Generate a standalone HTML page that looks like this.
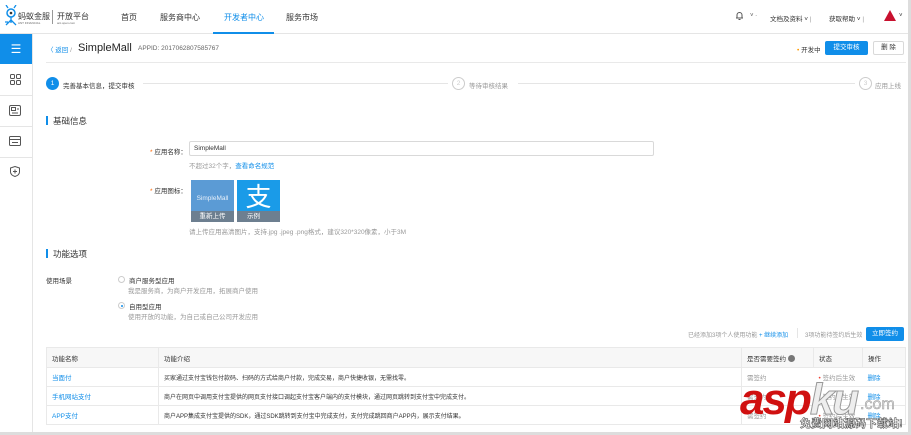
<!DOCTYPE html>
<html><head><meta charset="utf-8"><style>
*{margin:0;padding:0;box-sizing:border-box}
body{width:911px;height:435px;overflow:hidden;background:#fff;font-family:"Liberation Sans","Noto Sans CJK SC",sans-serif;font-size:7px;color:#333;position:relative}
.a{position:absolute;white-space:nowrap}
.blue{color:#108ee9}.gray{color:#999}
td{border-bottom:1px solid #e9e9e9;padding-left:5px;font-size:6.5px;height:19px}
</style></head><body>
<div class="a" style="left:0;top:0;width:911px;height:34px;border-bottom:1px solid #e5e5e5"></div>
<svg class="a" style="left:4px;top:5px" width="14" height="22" viewBox="0 0 14 22"><circle cx="7" cy="8" r="4" fill="none" stroke="#108ee9" stroke-width="1.5"/><circle cx="7" cy="8" r="1.3" fill="#333"/><path d="M4 3 L2 0 M10 3 L12 0 M7 12 L7 18 M7 15 L2 20 M7 15 L12 20 M4 17 L1 17" stroke="#108ee9" stroke-width="1.3" fill="none"/></svg>
<div class="a" style="left:18px;top:11px;font-size:8px;color:#333">蚂蚁金服</div>
<div class="a" style="left:18px;top:21px;font-size:3px;color:#666">ANT FINANCIAL</div>
<div class="a" style="left:52px;top:10px;width:1px;height:14px;background:#999"></div>
<div class="a" style="left:57px;top:11px;font-size:8px">开放平台</div>
<div class="a" style="left:57px;top:21px;font-size:3px;color:#666">ant.open.com</div>
<div class="a" style="left:121px;top:12px;font-size:8px">首页</div>
<div class="a" style="left:160px;top:12px;font-size:8px">服务商中心</div>
<div class="a blue" style="left:224px;top:12px;font-size:8px">开发者中心</div>
<div class="a" style="left:213px;top:32px;width:61px;height:2px;background:#108ee9"></div>
<div class="a" style="left:286px;top:12px;font-size:8px">服务市场</div>
<svg class="a" style="left:735px;top:11px" width="9" height="10" viewBox="0 0 9 10"><path d="M2 7 V4 A2.5 2.5 0 0 1 7 4 V7 H1 H8 M3.5 8.5 H5.5" stroke="#555" fill="none"/></svg>
<div class="a" style="left:750px;top:13px;font-size:6px;color:#555">˅ ·</div>
<div class="a" style="left:770px;top:13px;font-size:6.5px">文档及资料 ˅ <span class="gray">|</span></div>
<div class="a" style="left:829px;top:13px;font-size:6.5px">获取帮助 ˅ <span class="gray">|</span></div>
<div class="a" style="left:884px;top:10px;width:0;height:0;border-left:6px solid transparent;border-right:6px solid transparent;border-bottom:11px solid #c8102e"></div>
<div class="a" style="left:899px;top:13px;font-size:6px">˅</div>
<!-- sidebar -->
<div class="a" style="left:0;top:34px;width:33px;height:401px;border-right:1px solid #e5e5e5"></div>
<div class="a" style="left:0;top:34px;width:32px;height:30px;background:#108ee9;color:#fff;font-size:12px;text-align:center;line-height:30px">☰</div>
<div class="a" style="left:0;top:95px;width:32px;height:1px;background:#e5e5e5"></div>
<div class="a" style="left:0;top:126px;width:32px;height:1px;background:#e5e5e5"></div>
<div class="a" style="left:0;top:157px;width:32px;height:1px;background:#e5e5e5"></div>
<svg class="a" style="left:10px;top:74px" width="11" height="11" viewBox="0 0 11 11"><g fill="none" stroke="#555"><rect x="0.5" y="0.5" width="4" height="4" rx="1"/><rect x="6.5" y="0.5" width="4" height="4" rx="1"/><rect x="0.5" y="6.5" width="4" height="4" rx="1"/><rect x="6.5" y="6.5" width="4" height="4" rx="1"/></g></svg>
<svg class="a" style="left:9px;top:105px" width="12" height="11" viewBox="0 0 12 11"><g fill="none" stroke="#555"><rect x="0.5" y="0.5" width="11" height="10" rx="1.5"/><rect x="2.5" y="2.5" width="4" height="3"/><path d="M8 4 H10 M3 8 H9"/></g></svg>
<svg class="a" style="left:9px;top:136px" width="12" height="10" viewBox="0 0 12 10"><g fill="none" stroke="#555"><rect x="0.5" y="0.5" width="11" height="9" rx="1"/><path d="M0.5 3.5 H11.5 M3 6.5 H9"/></g></svg>
<svg class="a" style="left:10px;top:166px" width="10" height="11" viewBox="0 0 10 11"><path d="M5 0.5 L9.5 2 V6 Q9.5 9 5 10.5 Q0.5 9 0.5 6 V2 Z M5 3.5 V7.5 M3 5.5 H7" fill="none" stroke="#555"/></svg>
<!-- subheader -->
<div class="a blue" style="left:47px;top:44px;font-size:6.5px">〈 返回 <span class="gray">/</span></div>
<div class="a" style="left:78px;top:42px;font-size:11px;color:#222">SimpleMall</div>
<div class="a" style="left:138px;top:45px;font-size:6.5px;color:#666">APPID: 2017062807585767</div>
<div class="a" style="left:797px;top:44px;font-size:6.5px"><span style="color:#f90">•</span> 开发中</div>
<div class="a" style="left:825px;top:41px;width:43px;height:14px;background:#108ee9;border-radius:2px;color:#fff;font-size:6.5px;text-align:center;line-height:14px">提交审核</div>
<div class="a" style="left:873px;top:41px;width:31px;height:14px;border:1px solid #d9d9d9;border-radius:2px;font-size:6.5px;text-align:center;line-height:12px">删 除</div>
<div class="a" style="left:46px;top:62px;width:860px;height:1px;background:#e9e9e9"></div>
<!-- steps -->
<div class="a" style="left:46px;top:77px;width:13px;height:13px;border-radius:50%;background:#108ee9;color:#fff;font-size:6.5px;text-align:center;line-height:13px">1</div>
<div class="a" style="left:63px;top:80px;font-size:6.5px">完善基本信息，提交审核</div>
<div class="a" style="left:143px;top:83px;width:305px;height:1px;background:#e5e5e5"></div>
<div class="a" style="left:452px;top:77px;width:13px;height:13px;border-radius:50%;border:1px solid #ccc;color:#ccc;font-size:6.5px;text-align:center;line-height:11px">2</div>
<div class="a gray" style="left:469px;top:80px;font-size:6.5px">等待审核结果</div>
<div class="a" style="left:518px;top:83px;width:337px;height:1px;background:#e5e5e5"></div>
<div class="a" style="left:859px;top:77px;width:13px;height:13px;border-radius:50%;border:1px solid #ccc;color:#ccc;font-size:6.5px;text-align:center;line-height:11px">3</div>
<div class="a gray" style="left:875px;top:80px;font-size:6.5px">应用上线</div>
<!-- basic -->
<div class="a" style="left:46px;top:116px;width:2px;height:9px;background:#108ee9"></div>
<div class="a" style="left:53px;top:115px;font-size:8.5px">基础信息</div>
<div class="a" style="left:150px;top:146px;font-size:6.5px"><span style="color:#f60">*</span> 应用名称：</div>
<div class="a" style="left:189px;top:141px;width:465px;height:15px;border:1px solid #d9d9d9;border-radius:2px;font-size:6.5px;padding:3px 0 0 4px">SimpleMall</div>
<div class="a gray" style="left:189px;top:160px;font-size:6.5px">不超过32个字，<span class="blue">查看命名规范</span></div>
<div class="a" style="left:150px;top:185px;font-size:6.5px"><span style="color:#f60">*</span> 应用图标：</div>
<div class="a" style="left:191px;top:180px;width:43px;height:42px;background:#5b9bd5;color:#e8f0fa;font-size:6.5px;text-align:center;padding-top:15px">SimpleMall</div>
<div class="a" style="left:191px;top:211px;width:43px;height:11px;background:#6d7f90;color:#fff;font-size:6.5px;text-align:center;line-height:11px">重新上传</div>
<div class="a" style="left:237px;top:180px;width:43px;height:42px;background:#1a9be8;color:#fff;font-size:26px;text-align:center;line-height:34px">支</div>
<div class="a" style="left:237px;top:211px;width:43px;height:11px;background:#6d7f90;color:#fff;font-size:6.5px;line-height:11px;padding-left:10px">示例</div>
<div class="a gray" style="left:189px;top:226px;font-size:6.5px">请上传应用高清图片，支持.jpg .jpeg .png格式，建议320*320像素，小于3M</div>
<div class="a" style="left:46px;top:249px;width:2px;height:9px;background:#108ee9"></div>
<div class="a" style="left:53px;top:248px;font-size:8.5px">功能选项</div>
<div class="a" style="left:46px;top:275px;font-size:6.5px">使用场景</div>
<div class="a" style="left:118px;top:276px;width:7px;height:7px;border:1px solid #ccc;border-radius:50%"></div>
<div class="a" style="left:129px;top:275px;font-size:6.5px">商户服务型应用</div>
<div class="a gray" style="left:128px;top:285px;font-size:6.5px">我是服务商，为商户开发应用，拓展商户使用</div>
<div class="a" style="left:118px;top:302px;width:7px;height:7px;border:1px solid #ccc;border-radius:50%"></div>
<div class="a" style="left:120.5px;top:304.5px;width:2px;height:2px;background:#108ee9;border-radius:50%"></div>
<div class="a" style="left:129px;top:301px;font-size:6.5px">自用型应用</div>
<div class="a gray" style="left:128px;top:311px;font-size:6.5px">使用开放的功能，为自己或自己公司开发应用</div>
<div class="a gray" style="left:688px;top:330px;font-size:6px">已经添加3项个人使用功能 <span class="blue">+ 继续添加</span></div>
<div class="a" style="left:797px;top:328px;width:1px;height:10px;background:#e5e5e5"></div>
<div class="a gray" style="left:805px;top:330px;font-size:6px">3项功能待签约后生效</div>
<div class="a" style="left:866px;top:327px;width:38px;height:14px;background:#108ee9;border-radius:2px;color:#fff;font-size:6.5px;text-align:center;line-height:14px">立即签约</div>
<table class="a" style="left:46px;top:347px;width:860px;border-collapse:collapse;border:1px solid #e9e9e9">
<tr style="background:#f7f7f7"><td style="width:112px;border-right:1px solid #e9e9e9;height:20px">功能名称</td><td style="border-right:1px solid #e9e9e9">功能介绍</td><td style="width:72px;border-right:1px solid #e9e9e9">是否需要签约 <span style="display:inline-block;width:7px;height:7px;border-radius:50%;background:#777;vertical-align:middle"></span></td><td style="width:49px;border-right:1px solid #e9e9e9">状态</td><td style="width:43px">操作</td></tr>
<tr><td class="blue" style="border-right:1px solid #e9e9e9">当面付</td><td style="border-right:1px solid #e9e9e9;font-size:6px">买家通过支付宝钱包付款码、扫码的方式给商户付款，完成交易，商户快捷收银，无需找零。</td><td class="gray">需签约</td><td class="gray"><span style="color:#f04134">•</span> 签约后生效</td><td class="blue">删除</td></tr>
<tr><td class="blue" style="border-right:1px solid #e9e9e9">手机网站支付</td><td style="border-right:1px solid #e9e9e9;font-size:6px">商户在网页中调用支付宝提供的网页支付接口调起支付宝客户端内的支付模块，通过网页跳转到支付宝中完成支付。</td><td class="gray">需签约</td><td class="gray"><span style="color:#f04134">•</span> 签约后生效</td><td class="blue">删除</td></tr>
<tr><td class="blue" style="border-right:1px solid #e9e9e9">APP支付</td><td style="border-right:1px solid #e9e9e9;font-size:6px">商户APP集成支付宝提供的SDK，通过SDK跳转到支付宝中完成支付，支付完成跳回商户APP内，展示支付结果。</td><td class="gray">需签约</td><td class="gray"><span style="color:#f04134">•</span> 签约后生效</td><td class="blue">删除</td></tr>
</table>
<div class="a" style="left:0;top:432px;width:911px;height:3px;background:#ddd"></div>
<div class="a" style="left:908px;top:0;width:3px;height:435px;background:#ddd"></div>
<div class="a" style="left:740px;top:375px;font-size:44px;font-weight:bold;font-style:italic;color:#d01010;letter-spacing:-2px">asp<span style="color:#eee;-webkit-text-stroke:1px #999">ku</span></div>
<div class="a" style="left:860px;top:396px;font-size:16px;color:#ddd;-webkit-text-stroke:0.5px #999">.com</div>
<div class="a" style="left:800px;top:415px;font-size:11px;color:#fff;font-weight:bold;-webkit-text-stroke:0.6px #555">免费网站源码下载站!</div>
</body></html>
